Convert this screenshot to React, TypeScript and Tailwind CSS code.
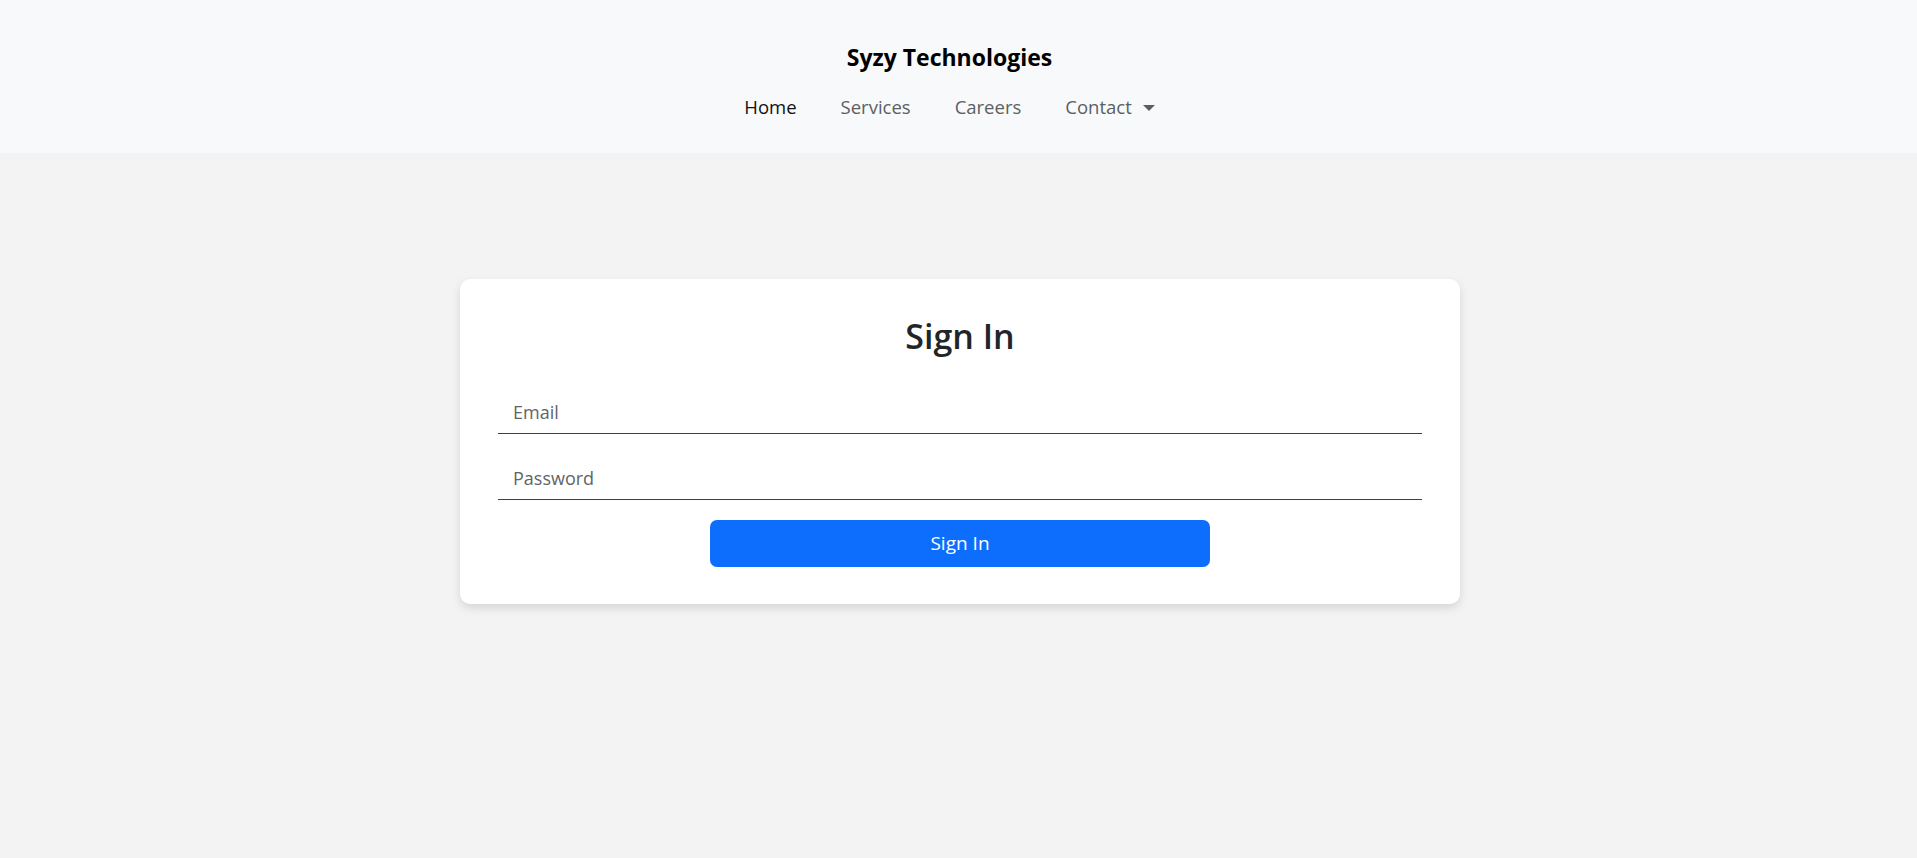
const navLinks = [
  { label: "Home", active: true },
  { label: "Services", active: false },
  { label: "Careers", active: false },
];

function Header() {
  return (
    <header className="flex flex-col items-center bg-[#f8f9fa] pb-[32px] pr-[18px] pt-[40px]">
      <h1 className="text-[23px] font-bold leading-[34px] text-black">Syzy Technologies</h1>
      <nav className="mt-[19px] flex items-center gap-[44px] text-[18.5px] leading-[28px]">
        {navLinks.map((link) => (
          <a
            key={link.label}
            href="#"
            className={link.active ? "text-[#111]" : "text-[#5c5f62]"}
          >
            {link.label}
          </a>
        ))}
        <a href="#" className="flex items-center text-[#5c5f62]">
          Contact
          <span className="ml-[11px] mt-[1px] h-0 w-0 border-x-[6px] border-t-[6px] border-x-transparent border-t-[#5c5f62]" />
        </a>
      </nav>
    </header>
  );
}

function SignInCard() {
  return (
    <div className="w-[1000px] rounded-[10px] bg-white px-[38px] pb-[37px] pt-[37px] shadow-[0_4px_10px_rgba(0,0,0,0.12)]">
      <h2 className="text-center text-[34px] font-semibold leading-[40px] text-[#212529]">Sign In</h2>
      <form className="mt-[35px] flex flex-col items-center" onSubmit={(e) => e.preventDefault()}>
        <input
          type="email"
          placeholder="Email"
          className="h-[43px] w-full border-0 border-b border-[#0d47a1] bg-transparent px-[15px] text-[18px] text-[#212529] outline-none placeholder:text-[#5f6468]"
        />
        <input
          type="password"
          placeholder="Password"
          className="mt-[23px] h-[43px] w-full border-0 border-b border-[#0d47a1] bg-transparent px-[15px] text-[18px] text-[#212529] outline-none placeholder:text-[#5f6468]"
        />
        <button
          type="submit"
          className="mt-[20px] h-[47px] w-[500px] rounded-[7px] bg-[#0d6efd] text-[19px] text-white"
        >
          Sign In
        </button>
      </form>
    </div>
  );
}

export default function App() {
  return (
    <div className="min-h-screen bg-[#f3f3f3] font-['Open_Sans',sans-serif]">
      <Header />
      <main className="flex justify-center pl-[3px] pt-[126px]">
        <SignInCard />
      </main>
    </div>
  );
}
